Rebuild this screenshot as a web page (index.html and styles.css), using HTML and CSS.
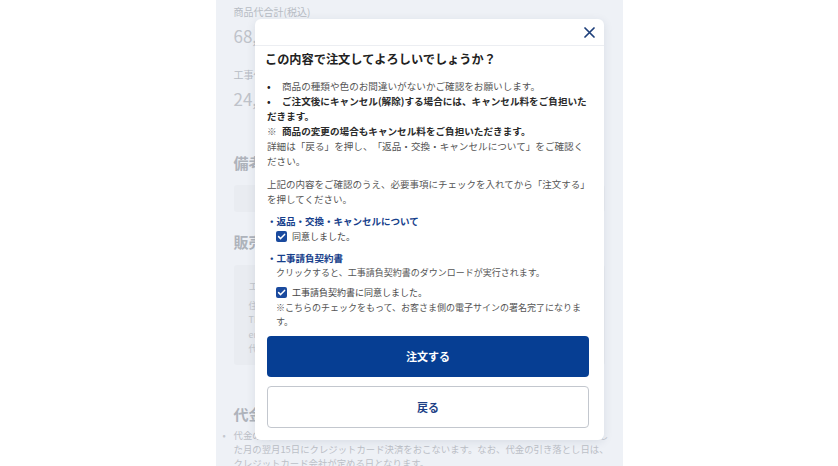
FILE: index.html
```html
<!DOCTYPE html>
<html lang="ja">
<head>
<meta charset="utf-8">
<link rel="stylesheet" href="styles.css">
</head>
<body>
<div class="page">
  <div class="column">
    <div class="label first">商品代合計(税込)</div>
    <div class="amount">68,</div>
    <div class="label">工事代</div>
    <div class="amount">24,</div>
    <div class="section">備考</div>
    <div class="notebox"></div>
    <div class="section">販売店</div>
    <div class="shopbox">
      <div>エ</div>
      <div>住</div>
      <div>TEL</div>
      <div>email</div>
      <div>代</div>
    </div>
    <div class="section pay">代金</div>
    <div class="payitem">
      <span class="bullet">•</span>
      <div class="paytext">代金の支払いについては、ご注文確定後、工事完了を確認した日の属する月を締め日とし<br>た月の翌月15日にクレジットカード決済をおこないます。なお、代金の引き落とし日は、<br>クレジットカード会社が定める日となります。</div>
    </div>
  </div>
</div>

<div class="modal">
  <div class="modal-head">
    <svg class="close" width="11" height="11" viewBox="0 0 11 11"><path d="M1 1L10 10M10 1L1 10" stroke="#1d3f7a" stroke-width="1.7" stroke-linecap="round"/></svg>
  </div>
  <div class="modal-body">
    <h2 class="title">この内容で注文してよろしいでしょうか？</h2>
    <div class="notes">
      <p class="row light"><span class="dot">•</span>商品の種類や色のお間違いがないかご確認をお願いします。</p>
      <p class="row strong"><span class="dot">•</span>ご注文後にキャンセル(解除)する場合には、キャンセル料をご負担いただきます。</p>
      <p class="row strong"><span class="kome">※</span>商品の変更の場合もキャンセル料をご負担いただきます。</p>
      <p class="row light">詳細は「戻る」を押し、「返品・交換・キャンセルについて」をご確認ください。</p>
    </div>
    <p class="lead">上記の内容をご確認のうえ、必要事項にチェックを入れてから「注文する」を押してください。</p>
    <div class="item">
      <div class="link">・返品・交換・キャンセルについて</div>
      <label class="check"><span class="box"><svg width="11" height="11" viewBox="0 0 11 11"><path d="M2.6 5.6L4.6 7.6L8.6 3.4" fill="none" stroke="#fff" stroke-width="1.5" stroke-linecap="round" stroke-linejoin="round"/></svg></span>同意しました。</label>
    </div>
    <div class="item">
      <div class="link">・工事請負契約書</div>
      <div class="sub">クリックすると、工事請負契約書のダウンロードが実行されます。</div>
      <label class="check second"><span class="box"><svg width="11" height="11" viewBox="0 0 11 11"><path d="M2.6 5.6L4.6 7.6L8.6 3.4" fill="none" stroke="#fff" stroke-width="1.5" stroke-linecap="round" stroke-linejoin="round"/></svg></span>工事請負契約書に同意しました。</label>
      <div class="sub">※こちらのチェックをもって、お客さま側の電子サインの署名完了になります。</div>
    </div>
    <button class="btn primary">注文する</button>
    <button class="btn secondary">戻る</button>
  </div>
</div>
</body>
</html>
```

FILE: styles.css
```css
* { box-sizing: border-box; }
html, body {
  margin: 0;
  padding: 0;
  background: #ffffff;
  width: 838px;
  height: 466px;
  overflow: hidden;
  font-family: "Noto Sans CJK JP", "Noto Sans", sans-serif;
}
.page {
  display: flex;
  justify-content: center;
  height: 466px;
}
.column {
  width: 407px;
  height: 466px;
  background: #eef1f6;
  padding: 5px 6px 0 18px;
  overflow: hidden;
  color: #b9bec6;
}
.label {
  font-size: 10px;
  line-height: 14px;
  color: #b7bcc4;
  margin-top: 21px;
}
.label.first { margin-top: 0; }
.amount {
  font-size: 17px;
  line-height: 22px;
  margin-top: 6px;
  color: #bfc3ca;
}
.section {
  font-size: 15px;
  font-weight: 700;
  color: #aeb3bb;
  line-height: 20px;
  margin-top: 43px;
}
.notebox {
  height: 27px;
  margin-top: 12px;
  margin-right: 12px;
  background: #e9ecf1;
  border-radius: 3px;
}
.section + .shopbox { margin-top: 13px; }
.notebox + .section { margin-top: 20px; }
.shopbox {
  height: 100px;
  margin-right: 12px;
  background: #e9ecf1;
  border-radius: 3px;
  padding: 14px 15px 0;
  font-size: 9px;
  line-height: 14.5px;
  color: #c3c7cd;
}
.shopbox div:first-child { margin-bottom: 5px; font-size: 10px; }
.section.pay { margin-top: 39px; }
.payitem {
  display: flex;
  margin: 4px 0 0 -11px;
  font-size: 9.4px;
  line-height: 14px;
  color: #bcc0c7;
  white-space: nowrap;
  text-spacing-trim: space-all;
}
.bullet {
  width: 11px;
  flex: none;
  color: #c4c8ce;
}
.paytext { flex: none; }

.modal {
  position: absolute;
  left: 255px;
  top: 19px;
  width: 349px;
  height: 421px;
  background: #ffffff;
  border-radius: 6px;
  box-shadow: 0 2px 10px rgba(30, 45, 80, 0.10);
  text-spacing-trim: space-all;
}
.modal-head {
  height: 27px;
  border-bottom: 1px solid #eceef2;
  display: flex;
  justify-content: flex-end;
  align-items: center;
  padding-right: 9px;
}
.close { display: block; }
.modal-body {
  padding: 4px 13px 0 10px;
}
.title {
  margin: 0;
  font-size: 12.2px;
  line-height: 18px;
  font-weight: 700;
  color: #222;
}
.notes {
  margin-top: 11px;
  padding-left: 2px;
  font-size: 9.6px;
  line-height: 15px;
}
.row { margin: 0; }
.row.light { color: #555; font-weight: 400; }
.row.strong { color: #2a2a2a; font-weight: 700; }
.dot {
  display: inline-block;
  width: 15px;
  color: #222;
  font-weight: 700;
}
.kome {
  display: inline-block;
  width: 15px;
  color: #666;
  font-weight: 400;
}
.lead {
  margin: 8px 0 0 2px;
  font-size: 9.5px;
  line-height: 15px;
  color: #555;
}
.item {
  margin-top: 7px;
  padding-left: 2px;
  font-size: 9.5px;
  line-height: 15px;
}
.link {
  color: #173f8c;
  font-weight: 700;
}
.check {
  display: flex;
  align-items: center;
  margin-left: 9px;
  color: #444;
  height: 15px;
  font-size: 9px;
}
.check.second { margin-top: 4px; }
.box {
  width: 11px;
  height: 11px;
  border-radius: 2px;
  background: #1a4a9e;
  margin-right: 5px;
  display: flex;
}
.sub {
  margin-left: 9px;
  color: #555;
  font-size: 9px;
  line-height: 14.5px;
  padding-right: 6px;
}
.check.second + .sub { margin-top: 1px; }
.btn {
  display: flex;
  align-items: center;
  justify-content: center;
  width: 322px;
  margin-left: 2px;
  border-radius: 4px;
  font-family: "Noto Sans CJK JP", "Noto Sans", sans-serif;
  font-size: 11px;
  font-weight: 700;
  cursor: pointer;
}
.btn.primary {
  margin-top: 6px;
  height: 41px;
  background: #063e93;
  color: #fff;
  border: none;
}
.btn.secondary {
  margin-top: 9px;
  height: 42px;
  background: #fff;
  color: #1d3f86;
  border: 1px solid #c3c7ce;
}
```
